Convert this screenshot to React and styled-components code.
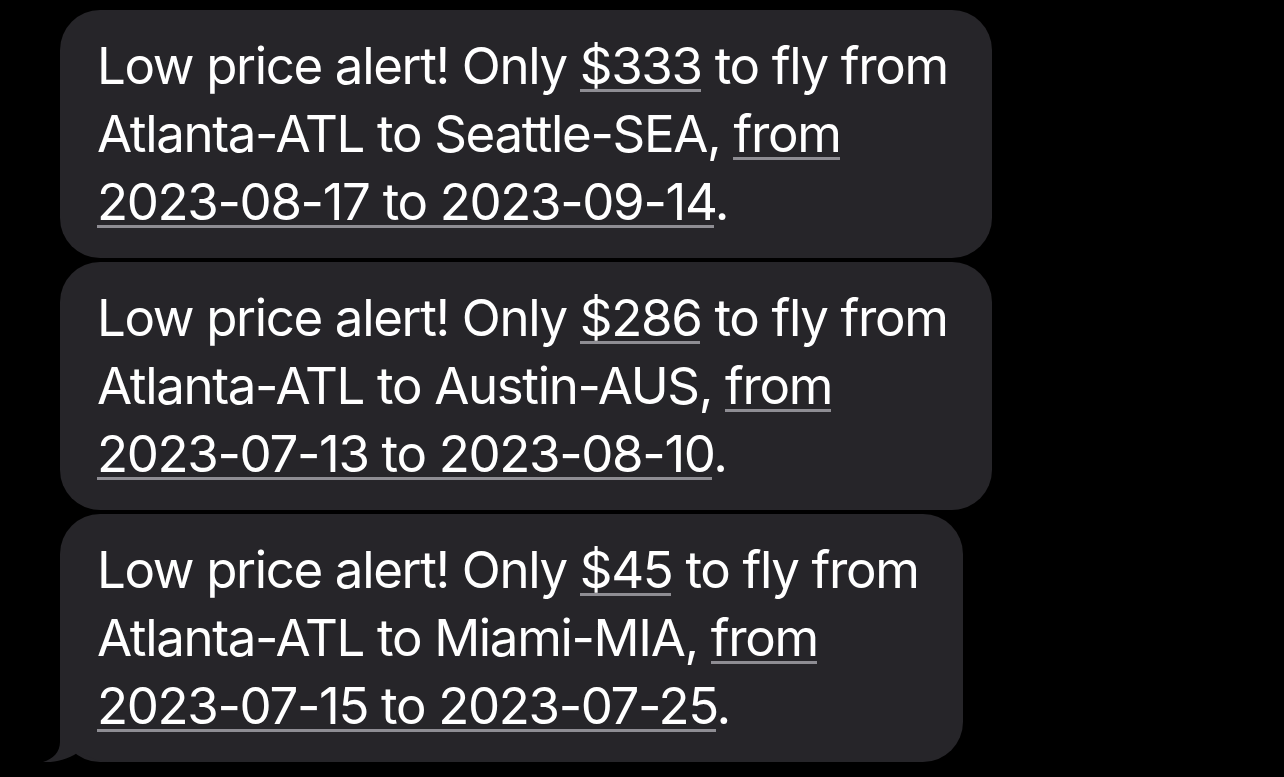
import React from 'react'
import styled, { createGlobalStyle } from 'styled-components'

const Global = createGlobalStyle`
  html, body {
    margin: 0;
    padding: 0;
    background: #000;
  }
  body {
    width: 1284px;
    height: 777px;
    overflow: hidden;
  }
`

const alerts = [
  { price: '$333', to: 'Seattle-SEA', start: '2023-08-17', end: '2023-09-14' },
  { price: '$286', to: 'Austin-AUS', start: '2023-07-13', end: '2023-08-10' },
  { price: '$45', to: 'Miami-MIA', start: '2023-07-15', end: '2023-07-25' },
]

const App = () => {
  return (
    <>
      <Global />
      <Thread>
        {alerts.map((a, i) => (
          <Bubble key={a.price}>
            {i === alerts.length - 1 && (
              <Tail viewBox="0 0 70 49" width="70" height="49">
                <path d="M17 0 L17 29 C17 39 10 46 0 49 C12 50 27 46 37 38 C45 44 53 48 67 49 L67 0 Z" fill="#262529" />
              </Tail>
            )}
            <Line>
              Low price alert! Only <Link>{a.price}</Link> to fly from
            </Line>
            <Line>
              Atlanta-ATL to {a.to}, <Link>from</Link>
            </Line>
            <Line>
              <Link>{a.start} to {a.end}</Link>.
            </Line>
          </Bubble>
        ))}
      </Thread>
    </>
  )
}

export default App

let Thread = styled.div`
display: flex;
flex-direction: column;
align-items: flex-start;
gap: 4px;
padding: 10px 0 0 60px;
`

let Bubble = styled.div`
position: relative;
background: #262529;
border-radius: 40px;
padding: 22px 44px 22px 37px;
font-family: "Inter", "Noto Sans", sans-serif;
font-size: 51px;
line-height: 68px;
letter-spacing: -1.35px;
color: #fff;
`

let Line = styled.div`
position: relative;
z-index: 1;
white-space: nowrap;
`

let Link = styled.span`
background-image: linear-gradient(#8e8d93, #8e8d93);
background-repeat: no-repeat;
background-size: calc(100% - 1px) 3px;
background-position: 0 calc(100% - 4px);
`

let Tail = styled.svg`
position: absolute;
left: -17px;
bottom: 0;
display: block;
z-index: 0;
`
